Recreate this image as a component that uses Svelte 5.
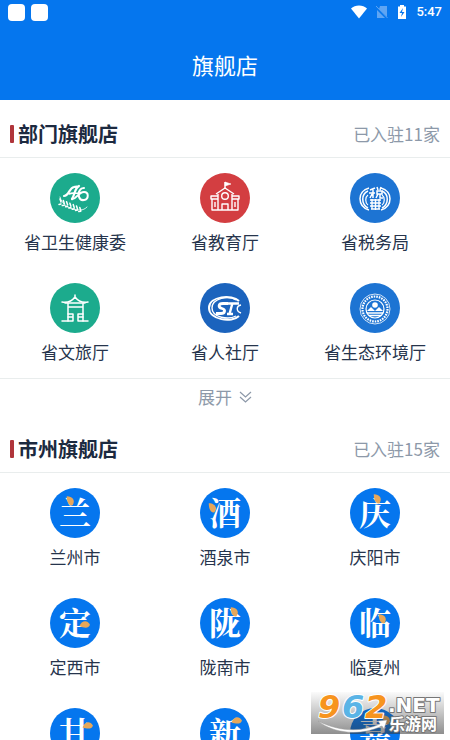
<script>
  const departments = [
    { name: '省卫生健康委', icon: 'health', color: '#1cab8d' },
    { name: '省教育厅', icon: 'school', color: '#d33e41' },
    { name: '省税务局', icon: 'tax', color: '#1d74d3' },
    { name: '省文旅厅', icon: 'culture', color: '#1cab8d' },
    { name: '省人社厅', icon: 'social', color: '#1b63bd' },
    { name: '省生态环境厅', icon: 'ecology', color: '#1d74d3' }
  ];

  // leaf: x, y, rotation of the orange accent inside the 50-unit badge
  const cities = [
    { name: '兰州市', glyph: '兰', leaf: [20, 13, 10] },
    { name: '酒泉市', glyph: '酒', leaf: [12, 20, 10] },
    { name: '庆阳市', glyph: '庆', leaf: [27, 11, 10] },
    { name: '定西市', glyph: '定', leaf: [35, 27, -55] },
    { name: '陇南市', glyph: '陇', leaf: [34, 14, 10] },
    { name: '临夏州', glyph: '临', leaf: [32, 21, 10] },
    { name: '甘南州', glyph: '甘', leaf: [38, 18, -60] },
    { name: '兰州新区', glyph: '新', leaf: [37, 13, -60] },
    { name: '嘉峪关市', glyph: '嘉', leaf: [36, 12, 10] }
  ];

  const grains = [0, 1, 2, 3, 4, 5, 6];
</script>

{#snippet departmentIcon(icon)}
  {#if icon === 'health'}
    <g fill="none" stroke="#fff" stroke-linecap="round" stroke-linejoin="round">
      <path d="M14 23c5 0 5-8 10-9 2-1 4 0 5-1-5 3-4 9-7 13" stroke-width="2.2" />
      <path d="M19 21c4-2 7 0 10-1" stroke-width="1.6" />
      <path d="M22 26c4 1 6-7 12-7 5 0 5 7 0 8-5 1-7-6-4-10 1-2 3-2 4-2" stroke-width="2" />
      <path d="M10 24c2 8 10 13 20 13 3 0 5-1 7-3" stroke-width="0.8" />
      {#each grains as i}
        <path d="M{11 + i * 3.3} {29 + i * 1.4}l-1-3M{11 + i * 3.3} {31 + i * 1.2}l-2 0.4" stroke-width="1.5" />
      {/each}
    </g>
  {:else if icon === 'school'}
    <g fill="none" stroke="#fff" stroke-width="1.4" stroke-linejoin="round">
      <path d="M25 16V9" />
      <path d="M25 9l6 2-6 2z" fill="#fff" stroke-width="0.6" />
      <path d="M16 21l9-6 9 6M18 21v16M32 21v16" />
      <path d="M18 23h-7v3h7M32 23h7v3h-7M12 26v11h26V26" />
      <circle cx="25" cy="23" r="3.3" />
      <path d="M22 37v-6h6v6M15 29v5M35 29v5" />
    </g>
  {:else if icon === 'tax'}
    <g fill="none" stroke="#fff">
      <path d="M19 15c-12 3-12 18 0 22M31 15c12 3 12 18 0 22" stroke-width="1.5" />
      <path d="M18 18c-7 3-7 13 0 17M32 18c7 3 7 13 0 17" stroke-width="1.5" />
      <path d="M18 22c-3 2-3 8 0 10M32 22c3 2 3 8 0 10" stroke-width="1.2" />
      <path d="M20 17l5-2M23 16v9M19 20h6M22 21l-2 4M27 14l1 3M31 14l-1 3M27 18h5v3h-5zM28 21l-2 4M30 21v4h3" stroke-width="1.5" />
      <path d="M20 27h11M20 30h11M20 33h11M22 26v10M25.5 26v11M29 26v10M21 36h9" stroke-width="1.4" />
    </g>
  {:else if icon === 'culture'}
    <g fill="none" stroke="#fff" stroke-width="1.5" stroke-linejoin="round" stroke-linecap="round">
      <path d="M25 12v2c-3 4-7 6-13 5M25 14c3 4 7 6 13 5" />
      <path d="M15 20h20M18 21v17M33 21v17M18 24h15" />
      <path d="M12 38h10M28 38h10M18 31h5v7M28 38v-7h5M18 34h5M28 34h5" />
    </g>
  {:else if icon === 'social'}
    <g fill="none" stroke="#fff">
      <path d="M39 18C32 11 9 13 9 25s23 15 30 8" stroke-width="2" />
      <path d="M36 17C29 12 12 15 12 25s17 12 24 8" stroke-width="1.4" />
      <path d="M28 20.5h-5c-5 0-5 4-1 5s3 5-1 5h-5" stroke-width="2.8" />
      <path d="M28 20.5h11M32.500 20l-3 11M27 31h6" stroke-width="2.4" />
      <path d="M41 22c-5 1-5 6 0 8" stroke-width="1.4" />
    </g>
  {:else}
    <g fill="none" stroke="#fff">
      <circle cx="25" cy="26" r="15" stroke-width="0.8" />
      <circle cx="25" cy="26" r="12.5" stroke-width="2.2" stroke-dasharray="1.6 1" />
      <circle cx="25" cy="26" r="9" stroke-width="1.2" />
      <circle cx="25" cy="22" r="2.8" fill="#fff" stroke="none" />
      <path d="M17 28l4-4 4 4 4-4 4 4z" fill="#fff" stroke="none" />
      <path d="M17 30h16M19 32.5h12" stroke-width="1.3" />
    </g>
  {/if}
{/snippet}

{#snippet sectionHead(title, count)}
  <div class="section-head">
    <h2>{title}</h2>
    <span class="count">已入驻{count}家</span>
  </div>
{/snippet}

<div class="app">
  <header>
    <div class="status">
      <div class="notices"><i></i><i></i></div>
      <div class="indicators">
        <svg width="16" height="14" viewBox="0 0 16 14" aria-hidden="true"><path d="M0 3.5C4-0.5 12-0.5 16 3.5L8 13.5z" fill="#fff" /></svg>
        <svg width="12" height="14" viewBox="0 0 12 14" aria-hidden="true"><path d="M4 1h7v11L3 4zM1 5l8 8H1z" fill="#5fa5f3" /><path d="M0 1l11.5 12" stroke="#5fa5f3" /></svg>
        <svg width="10" height="14" viewBox="0 0 10 14" aria-hidden="true"><path d="M3 0h4v1.5h2V14H1V1.5h2z" fill="#fff" /><path d="M6 3L2.5 8H5l-1 4 3.5-5H5z" fill="#0576ee" /></svg>
        <span>5:47</span>
      </div>
    </div>
    <h1>旗舰店</h1>
  </header>

  <main>
    <section>
      {@render sectionHead('部门旗舰店', 11)}
      <nav class="grid" aria-label="部门旗舰店">
        {#each departments as item}
          <a href="#top">
            <svg class="badge" viewBox="0 0 50 50" aria-hidden="true">
              <circle cx="25" cy="25" r="25" fill={item.color} />
              {@render departmentIcon(item.icon)}
            </svg>
            <span>{item.name}</span>
          </a>
        {/each}
      </nav>
      <button class="expand" type="button">
        展开
        <svg width="13" height="12" viewBox="0 0 13 12" aria-hidden="true"><path d="M1 1l5.5 5L12 1M1 6l5.5 5L12 6" fill="none" stroke="currentColor" stroke-width="1.2" /></svg>
      </button>
    </section>

    <section>
      {@render sectionHead('市州旗舰店', 15)}
      <nav class="grid" aria-label="市州旗舰店">
        {#each cities as item}
          <a href="#top">
            <svg class="badge" viewBox="0 0 50 50" aria-hidden="true">
              <circle cx="25" cy="25" r="25" fill="#0576ee" />
              <text class="glyph" x="25" y="37" text-anchor="middle">{item.glyph}</text>
              <path
                d="M-4-4C1-5 6-2 3 4-1 5-3 1-4-4z"
                fill="#e6a75a"
                transform="translate({item.leaf[0]} {item.leaf[1]}) rotate({item.leaf[2]})"
              />
            </svg>
            <span>{item.name}</span>
          </a>
        {/each}
      </nav>
    </section>
  </main>

  <svg class="watermark" viewBox="0 0 133 42" role="img" aria-label="962.NET 乐游网">
    <defs>
      <linearGradient id="shade" x1="0" y1="0" x2="0" y2="1">
        <stop offset="0" stop-color="#333" stop-opacity="0.02" />
        <stop offset="1" stop-color="#333" stop-opacity="0.55" />
      </linearGradient>
    </defs>
    <rect width="133" height="42" fill="url(#shade)" />
    <path d="M7 29c20 10 42 12 62 3l-2-3 9-1-3 9-2-3C50 44 23 42 7 29z" fill="#fff" stroke="#999" stroke-width="0.5" />
    <g class="digits">
      <text x="7" y="26" fill="#f7941e">9</text>
      <text x="31" y="26" fill="#5ab4e6">6</text>
      <text x="54" y="26" fill="#f7941e">2</text>
    </g>
    <text class="domain" x="77" y="20">.NET</text>
    <text class="site" x="78" y="38">乐游网</text>
  </svg>
</div>

<style>
  .app {
    position: relative;
    height: 100vh;
    display: flex;
    flex-direction: column;
    overflow: hidden;
    background: #fff;
    color: #26344c;
    font-family: 'Noto Sans CJK SC', sans-serif;
  }

  header {
    flex: none;
    background: #0576ee;
    color: #fff;
  }

  .status {
    display: flex;
    justify-content: space-between;
    align-items: center;
    height: 24px;
    padding: 0 8px;
  }

  .notices,
  .indicators {
    display: flex;
    align-items: center;
  }

  .notices {
    gap: 6px;
  }

  .notices i {
    width: 17px;
    height: 17px;
    border-radius: 4px;
    background: #fff;
  }

  .indicators {
    gap: 9px;
    font: 500 13px/24px Roboto, sans-serif;
  }

  h1,
  h2 {
    margin: 0;
  }

  h1 {
    padding: 24px 0 20px;
    font-size: 22px;
    font-weight: 400;
    line-height: 32px;
    text-align: center;
  }

  main {
    flex: 1;
    min-height: 0;
    overflow: hidden;
  }

  section {
    padding-top: 11px;
  }

  .section-head {
    display: flex;
    align-items: center;
    justify-content: space-between;
    height: 46px;
    padding: 0 10px;
    border-bottom: 1px solid #e9eded;
  }

  h2 {
    display: flex;
    align-items: center;
    gap: 4px;
    color: #1c2a40;
    font-size: 20px;
    font-weight: 700;
    line-height: 30px;
  }

  h2::before {
    content: '';
    width: 4px;
    height: 18px;
    border-radius: 1px;
    background: #b0353b;
  }

  .count,
  .expand {
    color: #8d99a9;
    font-size: 17px;
    line-height: 24px;
  }

  .grid {
    display: grid;
    grid-template-columns: repeat(3, 1fr);
    row-gap: 29px;
    padding: 15px 0 14px;
  }

  .grid a {
    display: flex;
    flex-direction: column;
    align-items: center;
    gap: 7px;
    color: inherit;
    font-size: 17px;
    line-height: 24px;
    text-decoration: none;
  }

  .badge {
    width: 50px;
    height: 50px;
  }

  .glyph {
    fill: #fff;
    font-family: 'Noto Serif CJK SC', 'Noto Sans CJK SC', serif;
    font-size: 32px;
    font-weight: 700;
  }

  .expand {
    display: flex;
    align-items: center;
    justify-content: center;
    gap: 7px;
    width: 100%;
    height: 37px;
    padding: 0;
    border: 0;
    border-top: 1px solid #e9eded;
    background: none;
    font-family: inherit;
  }

  .watermark {
    position: absolute;
    right: 6px;
    bottom: 6px;
    width: 133px;
    height: 42px;
  }

  .watermark text {
    paint-order: stroke;
    stroke-linejoin: round;
  }

  .digits {
    font: italic 700 32px 'DejaVu Sans', sans-serif;
    stroke: #fff;
    stroke-width: 2px;
  }

  .domain,
  .site {
    fill: #fff;
    stroke: #777;
    stroke-width: 2px;
    font-weight: 700;
  }

  .domain {
    font-family: 'DejaVu Sans', sans-serif;
    font-size: 20px;
  }

  .site {
    font-size: 16px;
  }
</style>
